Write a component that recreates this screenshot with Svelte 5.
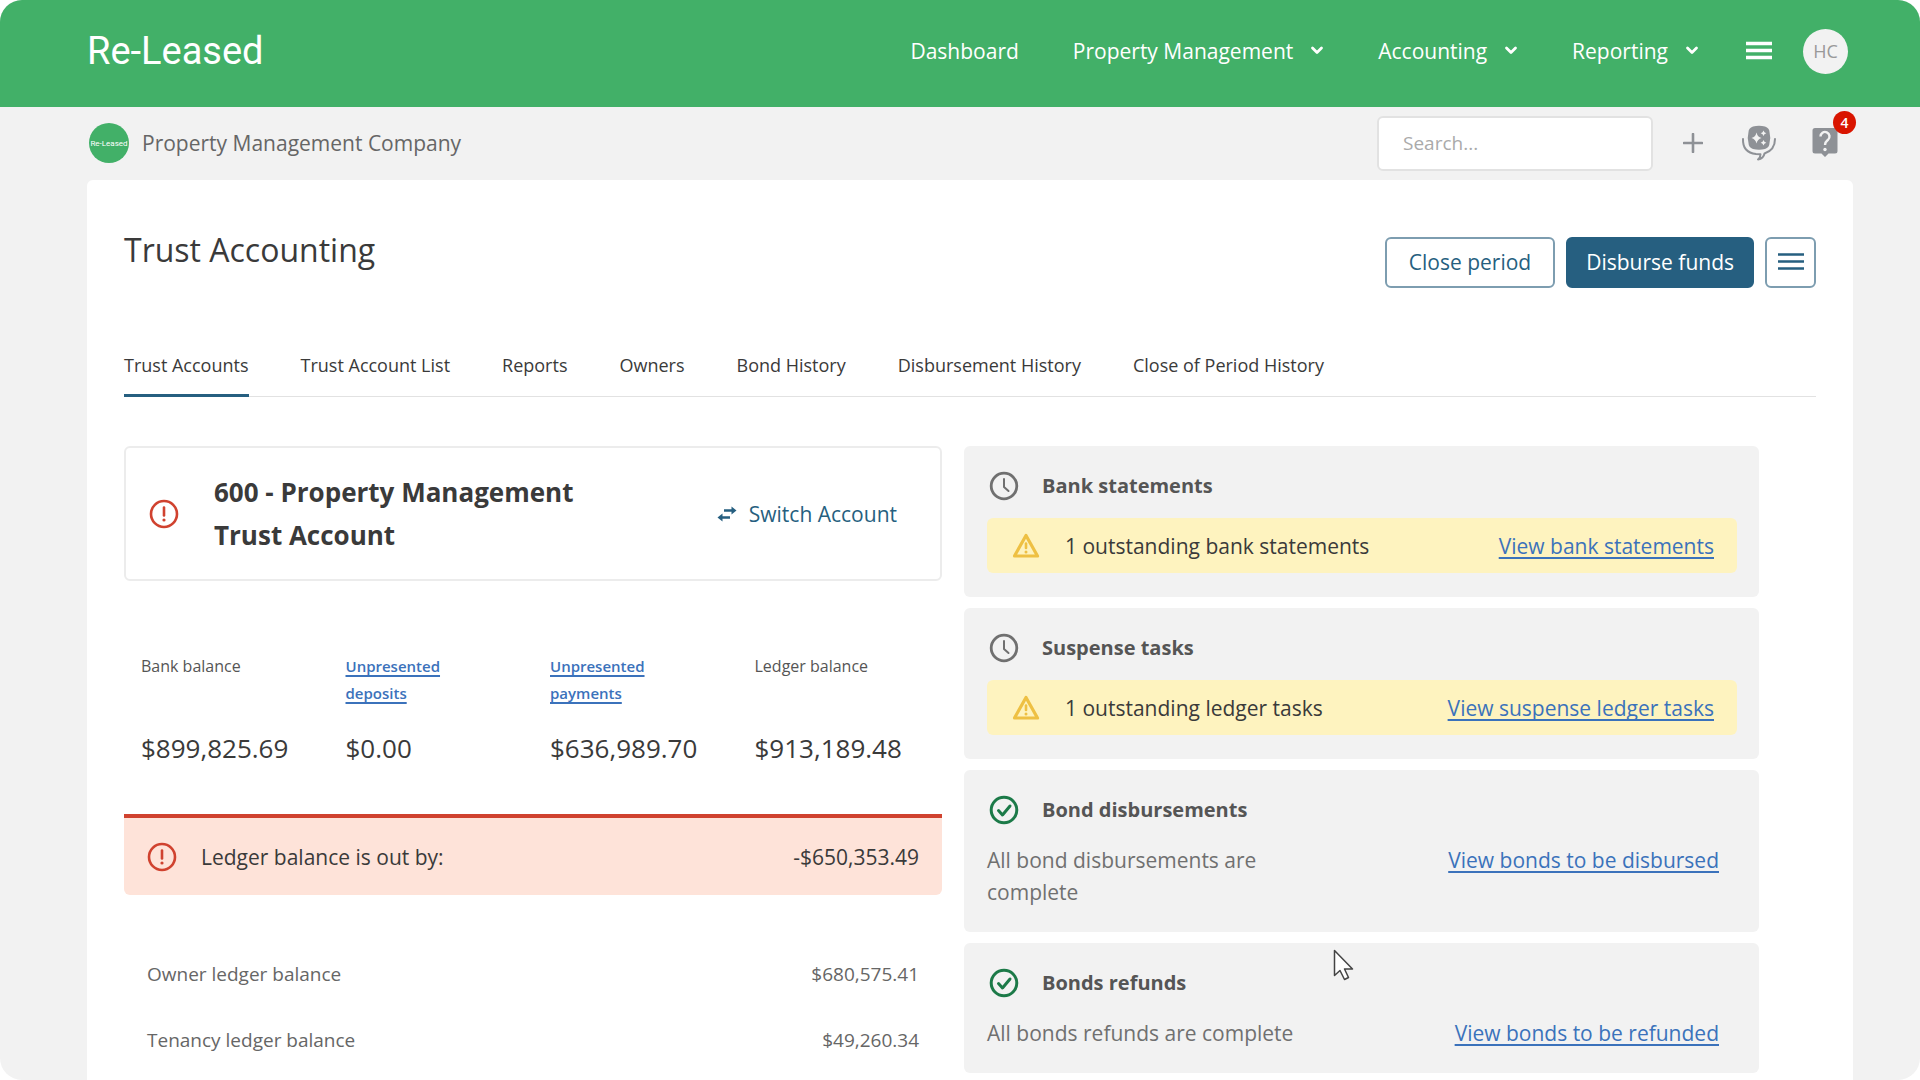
<script lang="ts">
  // Trust accounting overview: account summary on the left, task cards on the right.
  const nav: { label: string; menu: boolean }[] = [
    { label: "Dashboard", menu: false },
    { label: "Property Management", menu: true },
    { label: "Accounting", menu: true },
    { label: "Reporting", menu: true },
  ];

  const tabs = [
    "Trust Accounts",
    "Trust Account List",
    "Reports",
    "Owners",
    "Bond History",
    "Disbursement History",
    "Close of Period History",
  ];
  let activeTab = $state("Trust Accounts");

  const balances: { label: string; value: string; link?: boolean }[] = [
    { label: "Bank balance", value: "$899,825.69" },
    { label: "Unpresented deposits", value: "$0.00", link: true },
    { label: "Unpresented payments", value: "$636,989.70", link: true },
    { label: "Ledger balance", value: "$913,189.48" },
  ];

  const ledgers = [
    { label: "Owner ledger balance", value: "$680,575.41" },
    { label: "Tenancy ledger balance", value: "$49,260.34" },
  ];

  // `pending` cards get a clock and a yellow banner, the others a green tick.
  const tasks = [
    {
      title: "Bank statements",
      pending: true,
      text: "1 outstanding bank statements",
      link: "View bank statements",
    },
    {
      title: "Suspense tasks",
      pending: true,
      text: "1 outstanding ledger tasks",
      link: "View suspense ledger tasks",
    },
    {
      title: "Bond disbursements",
      pending: false,
      text: "All bond disbursements are complete",
      link: "View bonds to be disbursed",
    },
    {
      title: "Bonds refunds",
      pending: false,
      text: "All bonds refunds are complete",
      link: "View bonds to be refunded",
    },
  ];
</script>

{#snippet bars(weight: number)}
  <svg width="26" height="26" viewBox="0 0 26 26" fill="none" stroke="currentColor" stroke-width={weight} aria-hidden="true">
    <path d="M0 5.500h26M0 12.500h26M0 19.500h26" />
  </svg>
{/snippet}

{#snippet errorIcon()}
  <svg class="error-icon" width="30" height="30" viewBox="0 0 30 30" fill="none" stroke="currentColor" aria-hidden="true">
    <circle cx="15" cy="15" r="13" stroke-width="2.6" />
    <path d="M15 8.5v8" stroke-width="2.6" stroke-linecap="round" />
    <circle cx="15" cy="21" r="1.6" fill="currentColor" stroke="none" />
  </svg>
{/snippet}

<div class="app">
  <header class="topbar">
    <a class="logo" href="#home">Re-Leased</a>
    <nav>
      {#each nav as item (item.label)}
        {#if item.menu}
          <button class="nav-item">
            {item.label}
            <svg width="14" height="10" viewBox="0 0 14 10" fill="none" stroke="currentColor" stroke-width="2.8" stroke-linecap="round" stroke-linejoin="round" aria-hidden="true">
              <path d="M2.500 2l4.500 4.500 4.500-4.500" />
            </svg>
          </button>
        {:else}
          <a class="nav-item" href="#dashboard">{item.label}</a>
        {/if}
      {/each}
    </nav>
    <button class="burger" aria-label="Menu">{@render bars(3.4)}</button>
    <button class="user" aria-label="Account HC">HC</button>
  </header>

  <div class="subbar">
    <span class="company-logo">Re-Leased</span>
    <span class="company">Property Management Company</span>
    <input type="text" placeholder="Search..." aria-label="Search" />
    <button class="tool" aria-label="Add">
      <svg width="20" height="20" viewBox="0 0 20 20" fill="none" stroke="currentColor" stroke-width="2.6" stroke-linecap="round" aria-hidden="true">
        <path d="M10 1v18M1 10h18" />
      </svg>
    </button>
    <button class="tool" aria-label="Assistant">
      <svg width="36" height="36" viewBox="0 0 36 36" aria-hidden="true">
        <path d="M12 1.5Q18 0 24 1.5Q28.500 3 28.500 7Q30 13 28.500 18Q28.500 22.500 24 24Q18 25.500 12 24Q7.500 22.500 7.500 18Q6 13 7.500 7Q7.500 3 12 1.500Z" fill="currentColor" />
        <path d="M15.500 7.500q1 4.500 5 5.500q-4 1-5 5.500q-1-4.500-5-5.500q4-1 5-5.500zM22.500 5.500q.5 2.300 2.800 2.800q-2.300 .5-2.800 2.800q-.5-2.300-2.800-2.800q2.300-.5 2.800-2.800zM22.500 15q.5 2.300 2.800 2.800q-2.300 .5-2.800 2.800q-.5-2.300-2.800-2.800q2.300-.5 2.800-2.800z" fill="#f2f2f2" />
        <path d="M2 14Q1.500 27.500 15 29L19.500 29.300Q19.500 32.500 17 34.500Q22.500 33.500 23.500 28.500Q34 25 34 14" fill="none" stroke="currentColor" stroke-width="2" stroke-linecap="round" stroke-linejoin="round" />
      </svg>
    </button>
    <button class="tool help" aria-label="Help, 4 notifications">
      <svg width="26" height="30" viewBox="0 0 26 30" aria-hidden="true">
        <path d="M3 0h20a2.500 2.500 0 0 1 2.500 2.500v20.500a2.500 2.500 0 0 1-2.500 2.500h-6.500l-3.500 3.500-3.500-3.500h-6.500a2.500 2.500 0 0 1-2.500-2.500v-20.500a2.500 2.500 0 0 1 2.500-2.500z" fill="currentColor" />
        <path d="M8.500 8.500a4.500 4.500 0 1 1 7.500 3.300c-1.600 1.400-3 2.200-3 5.200" fill="none" stroke="#f2f2f2" stroke-width="2.4" />
        <circle cx="13" cy="21.500" r="1.7" fill="#f2f2f2" />
      </svg>
      <span class="badge">4</span>
    </button>
  </div>

  <main>
    <div class="title-row">
      <h1>Trust Accounting</h1>
      <button class="btn">Close period</button>
      <button class="btn primary">Disburse funds</button>
      <button class="btn square" aria-label="More actions">{@render bars(2.6)}</button>
    </div>

    <div class="tabs" role="tablist">
      {#each tabs as tab (tab)}
        <button
          role="tab"
          class:active={tab === activeTab}
          aria-selected={tab === activeTab}
          onclick={() => (activeTab = tab)}>{tab}</button
        >
      {/each}
    </div>

    <div class="columns">
      <section class="summary">
        <div class="account">
          {@render errorIcon()}
          <h2>600 - Property Management Trust Account</h2>
          <button class="switch">
            <svg width="20" height="16" viewBox="0 0 20 16" aria-hidden="true">
              <path d="M7 4.500h9M4 11.500h9" stroke="currentColor" stroke-width="2.4" />
              <path d="M14.500 .5l5 4-5 4zM5.500 7.500l-5 4 5 4z" fill="currentColor" />
            </svg>
            Switch Account
          </button>
        </div>

        <dl class="balances">
          {#each balances as b (b.label)}
            <div>
              <dt>
                {#if b.link}<a href="#unpresented">{b.label}</a>{:else}{b.label}{/if}
              </dt>
              <dd>{b.value}</dd>
            </div>
          {/each}
        </dl>

        <div class="alert" role="alert">
          {@render errorIcon()}
          <span>Ledger balance is out by:</span>
          <span class="amount">-$650,353.49</span>
        </div>

        <table>
          <tbody>
            {#each ledgers as l (l.label)}
              <tr>
                <th scope="row">{l.label}</th>
                <td>{l.value}</td>
              </tr>
            {/each}
          </tbody>
        </table>
      </section>

      <section class="tasks">
        {#each tasks as t (t.title)}
          <article>
            <h3>
              {#if t.pending}
                <svg class="clock" width="30" height="30" viewBox="0 0 30 30" fill="none" stroke="currentColor" stroke-linecap="round" stroke-linejoin="round" aria-hidden="true">
                  <circle cx="15" cy="15" r="12.800" stroke-width="2.800" />
                  <path d="M15 8v8l4.500 4" stroke-width="2" />
                </svg>
              {:else}
                <svg class="tick" width="30" height="30" viewBox="0 0 30 30" fill="none" stroke="currentColor" stroke-linecap="round" stroke-linejoin="round" aria-hidden="true">
                  <circle cx="15" cy="15" r="12.800" stroke-width="3" />
                  <path d="M9.500 15.500l4 4.500 7.500-9" stroke-width="3" />
                </svg>
              {/if}
              {t.title}
            </h3>
            <div class={t.pending ? "banner" : "done"}>
              {#if t.pending}
                <svg class="warn" width="28" height="26" viewBox="0 0 28 26" fill="none" stroke="currentColor" stroke-linejoin="round" stroke-linecap="round" aria-hidden="true">
                  <path d="M14 2.500L25.500 23h-23z" stroke-width="3.200" />
                  <path d="M14 10.500v4.500" stroke-width="2.600" />
                  <circle cx="14" cy="19" r="1.500" fill="currentColor" stroke="none" />
                </svg>
              {/if}
              <p>{t.text}</p>
              <a href="#tasks">{t.link}</a>
            </div>
          </article>
        {/each}
      </section>
    </div>
  </main>

  <svg class="pointer" width="22" height="32" viewBox="0 0 22 32" aria-hidden="true">
    <path d="M1.500 1.500v25l5.500-5 4.500 9 4-2-4-8.500h8z" fill="#fff" stroke="#444" stroke-width="1.500" stroke-linejoin="round" />
  </svg>
</div>

<style>
  :global(body) {
    background: #fff;
  }
  .app {
    position: relative;
    display: flex;
    flex-direction: column;
    min-height: 100vh;
    overflow: hidden;
    box-sizing: border-box;
    border-radius: 22px;
    background: #f2f2f2;
    color: #3a3a3a;
    font-family: "Open Sans", "Noto Sans", sans-serif;
    font-size: 21px;
  }
  .app * {
    box-sizing: border-box;
  }
  button {
    padding: 0;
    border: 0;
    background: none;
    color: inherit;
    font: inherit;
    cursor: pointer;
  }
  svg {
    display: block;
    flex: none;
  }
  h1,
  h2,
  h3,
  p,
  dl,
  dd {
    margin: 0;
  }

  .topbar {
    display: flex;
    align-items: center;
    height: 107px;
    padding: 0 72px 5px 87px;
    background: #42b068;
    color: #fff;
  }
  .logo {
    margin-right: auto;
    color: #fff;
    font-family: Roboto, sans-serif;
    font-size: 38px;
    text-decoration: none;
  }
  nav {
    display: flex;
    gap: 54px;
  }
  .nav-item {
    display: flex;
    align-items: center;
    gap: 17px;
    color: #fff;
    text-decoration: none;
  }
  .burger {
    margin: 0 31px 0 47px;
  }
  .user {
    width: 45px;
    height: 45px;
    border-radius: 50%;
    background: #f2f2f2;
    color: #999;
    font-size: 18px;
  }

  .subbar {
    display: flex;
    align-items: center;
    height: 73px;
    padding: 0 82px 1px 89px;
    color: #666;
  }
  .company-logo {
    display: flex;
    align-items: center;
    justify-content: center;
    width: 40px;
    height: 40px;
    margin-right: 13px;
    border-radius: 50%;
    background: #42b068;
    color: #fff;
    font-family: Roboto, sans-serif;
    font-size: 8px;
  }
  .company {
    margin-right: auto;
  }
  input {
    width: 276px;
    height: 55px;
    margin-right: 30px;
    padding: 0 24px;
    border: 2px solid #e2e2e2;
    border-radius: 6px;
    background: #fff;
    color: #333;
    font: inherit;
    font-size: 19px;
  }
  input::placeholder {
    color: #aaa;
    opacity: 1;
  }
  .tool {
    margin-right: 38px;
    color: #8e9196;
  }
  .tool:nth-last-child(2) {
    margin-right: 35px;
  }
  .help {
    position: relative;
    margin-right: 0;
  }
  .badge {
    position: absolute;
    top: -17px;
    right: -18px;
    width: 23px;
    height: 23px;
    border-radius: 50%;
    background: #d91500;
    color: #fff;
    font-size: 14px;
    font-weight: 600;
    line-height: 23px;
  }

  main {
    flex: 1;
    margin: 0 67px 0 87px;
    padding: 50px 37px 0;
    border-radius: 6px 6px 0 0;
    background: #fff;
  }
  .title-row {
    display: flex;
    align-items: center;
    gap: 11px;
  }
  h1 {
    margin: 0 auto 24px 0;
    font-size: 32px;
    font-weight: 400;
    line-height: 40px;
  }
  .btn {
    height: 51px;
    padding: 0 22px;
    border: 2px solid #7d9db0;
    border-radius: 6px;
    color: #265f80;
  }
  .primary {
    padding: 0 18px;
    border-color: #265f80;
    background: #265f80;
    color: #fff;
  }
  .square {
    display: grid;
    place-items: center;
    width: 51px;
    padding: 0;
  }
  .tabs {
    display: flex;
    gap: 52px;
    margin-top: 45px;
    border-bottom: 1px solid #e2e2e2;
    font-size: 18px;
    line-height: 24px;
  }
  .tabs button {
    margin-bottom: -1px;
    padding: 14px 0 17px;
    border-bottom: 3px solid transparent;
  }
  .tabs .active {
    border-bottom-color: #265f80;
  }

  .columns {
    display: grid;
    grid-template-columns: 818fr 795fr;
    gap: 22px;
    align-items: start;
    margin-top: 49px;
    padding-right: 57px;
  }
  .account {
    display: flex;
    align-items: center;
    height: 135px;
    padding: 0 43px 0 23px;
    border: 2px solid #ececec;
    border-radius: 6px;
  }
  .error-icon {
    color: #d0422f;
  }
  h2 {
    width: 400px;
    margin: 0 auto 0 35px;
    font-size: 26px;
    font-weight: 700;
    line-height: 43px;
  }
  .switch {
    display: flex;
    align-items: center;
    gap: 12px;
    color: #265f80;
  }
  .balances {
    display: grid;
    grid-template-columns: repeat(4, 1fr);
    margin-top: 72px;
  }
  .balances > div {
    display: flex;
    flex-direction: column;
    padding-left: 17px;
  }
  dt {
    width: 120px;
    height: 54px;
    margin-bottom: 22px;
    color: #555;
    font-size: 16px;
    font-weight: 500;
    line-height: 27px;
  }
  dt a {
    font-size: 15px;
    font-weight: 600;
  }
  dd {
    font-size: 26px;
    line-height: 38px;
  }
  a {
    color: #3b72bb;
    text-decoration-thickness: 2px;
    text-decoration-skip-ink: none;
    text-underline-offset: 3px;
  }
  .alert {
    display: flex;
    align-items: center;
    gap: 24px;
    height: 81px;
    margin-top: 47px;
    padding: 0 23px;
    border-top: 4px solid #d0422f;
    border-radius: 0 0 6px 6px;
    background: #fee3d9;
  }
  .amount {
    margin-left: auto;
  }
  table {
    width: 100%;
    margin-top: 46px;
    border-collapse: collapse;
    color: #666;
    font-size: 19px;
  }
  th,
  td {
    height: 66px;
    padding: 0 23px;
    font-weight: 400;
    text-align: left;
  }
  td {
    text-align: right;
  }

  .tasks {
    display: flex;
    flex-direction: column;
    gap: 11px;
  }
  article {
    padding: 24px 22px 24px 23px;
    border-radius: 6px;
    background: #f2f2f2;
  }
  h3 {
    display: flex;
    align-items: center;
    gap: 23px;
    margin-left: 2px;
    color: #555;
    font-size: 20px;
    font-weight: 700;
    line-height: 32px;
  }
  .clock {
    color: #707070;
  }
  .tick {
    color: #1c7a48;
  }
  .banner,
  .done {
    display: flex;
    justify-content: space-between;
    line-height: 32px;
  }
  .banner {
    align-items: center;
    height: 55px;
    margin-top: 16px;
    padding: 0 23px 0 25px;
    border-radius: 6px;
    background: #fef3bf;
  }
  .banner p {
    margin: 0 auto 0 25px;
  }
  .warn {
    color: #eec043;
  }
  .done {
    margin-top: 18px;
    padding-right: 18px;
    color: #707070;
  }
  .done p {
    max-width: 45%;
  }

  .pointer {
    position: absolute;
    top: 949px;
    left: 1333px;
  }
</style>
